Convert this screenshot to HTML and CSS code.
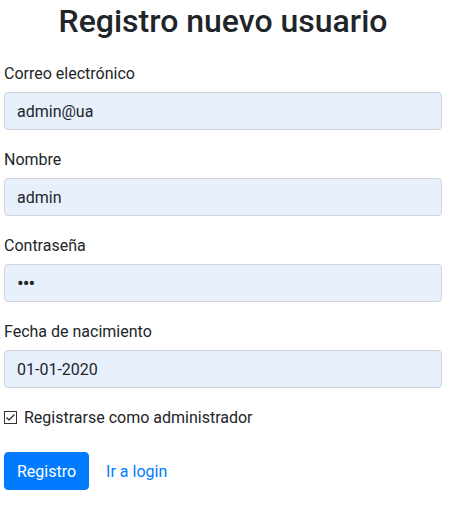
FILE: index.html
```html
<!DOCTYPE html>
<html lang="es">
<head>
<meta charset="utf-8">
<link rel="stylesheet" href="styles.css">
</head>
<body>
<main class="page">
  <h2 class="title">Registro nuevo usuario</h2>
  <form class="form">
    <div class="group">
      <label class="label">Correo electrónico</label>
      <div class="input">admin@ua</div>
    </div>
    <div class="group">
      <label class="label">Nombre</label>
      <div class="input">admin</div>
    </div>
    <div class="group">
      <label class="label">Contraseña</label>
      <div class="input dots">•••</div>
    </div>
    <div class="group">
      <label class="label">Fecha de nacimiento</label>
      <div class="input">01-01-2020</div>
    </div>
    <div class="check">
      <svg class="box" width="13" height="13" viewBox="0 0 13 13"><rect x="0.5" y="0.5" width="12" height="12" fill="#fff" stroke="#333"/><path d="M2.5 6.5 L5 9 L10.5 3.5" fill="none" stroke="#222" stroke-width="1.2"/></svg>
      <span class="check-text">Registrarse como administrador</span>
    </div>
    <div class="actions">
      <button type="button" class="btn">Registro</button>
      <a class="link" href="#">Ir a login</a>
    </div>
  </form>
</main>
</body>
</html>
```
FILE: styles.css
```css
html, body {
  margin: 0;
  padding: 0;
  background: #fff;
}
body {
  font-family: Roboto, "Noto Sans", Arial, sans-serif;
  font-size: 16px;
  line-height: 24px;
  color: #212529;
}
.page {
  padding: 0 9px 0 4px;
}
.title {
  margin: 0 0 20px;
  padding-top: 2px;
  text-align: center;
  font-size: 32px;
  font-weight: 500;
  line-height: 38px;
  color: #212529;
}
.group {
  margin-bottom: 16px;
}
.label {
  display: block;
  padding-top: 2px;
  margin-bottom: 6px;
}
.input {
  box-sizing: border-box;
  height: 38px;
  padding: 7px 12px 5px;
  background: #e8f0fe;
  border: 1px solid #ced4da;
  border-radius: 4px;
  color: #212529;
}
.dots {
  font-size: 20px;
  letter-spacing: -1px;
  padding-top: 6px;
}
.check {
  display: flex;
  align-items: center;
  gap: 7px;
  margin-top: 16px;
}
.box {
  display: block;
  margin-top: 1px;
}
.check-text {
  padding-top: 2px;
}
.actions {
  display: flex;
  align-items: center;
  gap: 17px;
  margin-top: 22px;
}
.btn {
  height: 38px;
  padding: 7px 12px 5px;
  font: inherit;
  color: #fff;
  background: #007bff;
  border: 1px solid #007bff;
  border-radius: 4px;
}
.link {
  color: #007bff;
  text-decoration: none;
  padding-top: 2px;
}
```
